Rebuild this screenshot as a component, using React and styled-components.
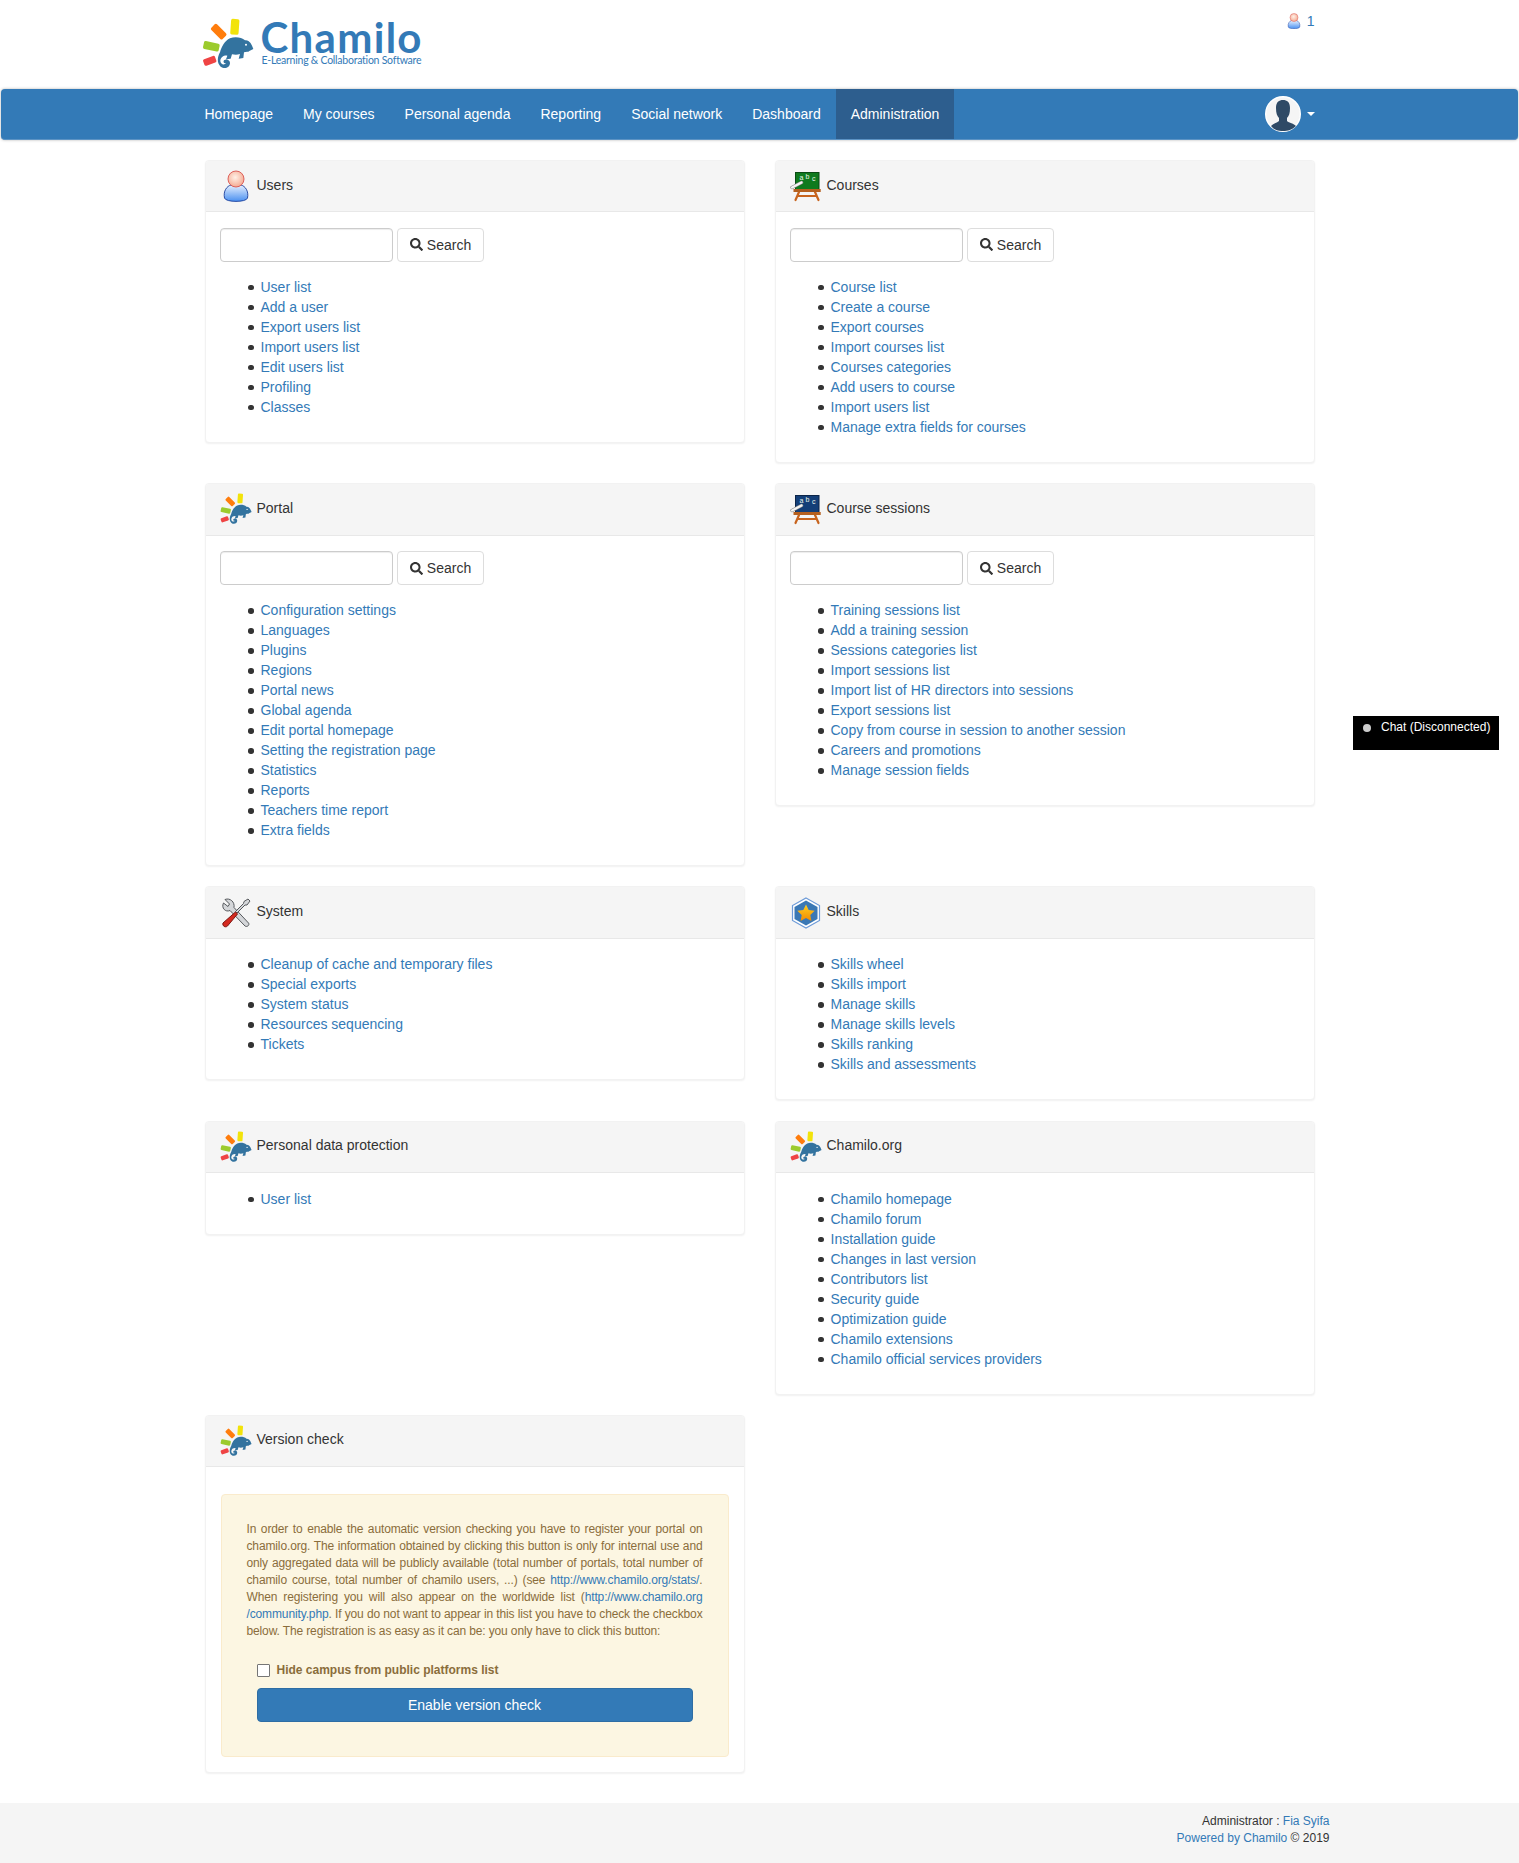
import React from "react";
import styled, { createGlobalStyle } from "styled-components";
import { FaSearch } from "react-icons/fa";

const GlobalStyle = createGlobalStyle`
  html, body {
    margin: 0;
    padding: 0;
    background: #ffffff;
    font-family: "Liberation Sans", Arial, sans-serif;
    font-size: 14px;
    line-height: 20px;
    color: #333333;
  }
  * { box-sizing: border-box; }
`;

const Page = styled.div`
  position: relative;
  width: 100%;
  min-height: 1863px;
  display: flex;
  flex-direction: column;
`;

const Header = styled.header`
  width: 1140px;
  height: 89px;
  margin: 0 auto;
  padding: 0 15px;
  display: flex;
  justify-content: space-between;
  align-items: flex-start;
`;

const Logo = styled.div`
  display: flex;
  align-items: flex-start;
  margin-top: 18px;
  margin-left: -3px;
`;

const LogoText = styled.div`
  margin: 1px 0 0 7px;
  display: flex;
  flex-direction: column;
  color: #337ab7;
`;

const LogoName = styled.span`
  font-family: "Lato", sans-serif;
  font-weight: 700;
  font-size: 42px;
  line-height: 36px;
  letter-spacing: 1.3px;
`;

const LogoTag = styled.span`
  font-family: "Lato", sans-serif;
  font-size: 10.5px;
  line-height: 11px;
  letter-spacing: -0.24px;
  white-space: nowrap;
  margin-left: 1px;
`;

const UserCount = styled.a`
  display: flex;
  align-items: center;
  gap: 5px;
  margin-top: 11px;
  color: #337ab7;
  font-size: 14px;
`;

const Navbar = styled.nav`
  height: 51px;
  background: #337ab7;
  border-radius: 4px;
  border-bottom: 1px solid #5c93c4;
  box-shadow: 0 0 3px rgba(0, 0, 0, 0.3);
  margin: 0 1px 20px;
`;

const NavInner = styled.div`
  width: 1140px;
  height: 50px;
  margin: 0 auto;
  display: flex;
  justify-content: space-between;
`;

const NavList = styled.div`
  display: flex;
`;

const NavItem = styled.a`
  padding: 15px;
  height: 50px;
  color: #ffffff;
  font-size: 14px;
  line-height: 20px;
  background: ${(p) => (p.$active ? "#2d5e8e" : "transparent")};
`;

const AvatarMenu = styled.div`
  display: flex;
  align-items: center;
  gap: 6px;
  margin-right: 15px;
`;

const Avatar = styled.svg`
  width: 36px;
  height: 36px;
  display: block;
`;

const Caret = styled.span`
  width: 0;
  height: 0;
  border-left: 4px solid transparent;
  border-right: 4px solid transparent;
  border-top: 4px solid #ffffff;
`;

const Grid = styled.main`
  width: 1110px;
  margin: 0 auto;
  display: grid;
  grid-template-columns: 540px 540px;
  column-gap: 30px;
  row-gap: 20.2px;
  align-items: start;
`;

const Panel = styled.section`
  background: #ffffff;
  border: 1px solid #f2f2f2;
  border-radius: 4px;
  box-shadow: 0 1px 2px rgba(0, 0, 0, 0.06);
`;

const PanelHeading = styled.div`
  height: 51.4px;
  padding: 0 14px;
  background: #f5f5f5;
  border-bottom: 1px solid #e8e8e8;
  border-radius: 3px 3px 0 0;
  display: flex;
  align-items: center;
  gap: 5px;
  font-size: 14px;
`;

const PanelTitle = styled.span`
  margin-bottom: 3px;
`;

const PanelBody = styled.div`
  padding: 15.6px 15px 15px;
`;

const SearchForm = styled.form`
  display: flex;
  gap: 4px;
  margin: 0 0 15px -0.5px;
`;

const SearchInput = styled.input`
  width: 173px;
  height: 34px;
  border: 1px solid #cccccc;
  border-radius: 4px;
  box-shadow: inset 0 1px 1px rgba(0, 0, 0, 0.075);
  background: #ffffff;
`;

const SearchButton = styled.button`
  height: 34px;
  width: 87px;
  padding: 0;
  border: 1px solid #dddddd;
  border-radius: 4px;
  background: #ffffff;
  color: #333333;
  font-family: inherit;
  font-size: 14px;
  display: flex;
  align-items: center;
  justify-content: center;
  gap: 4px;
`;

const LinkList = styled.ul`
  margin: 0 0 10px;
  padding-left: 40px;
  list-style: none;
`;

const LinkItem = styled.li`
  position: relative;

  &::before {
    content: "";
    position: absolute;
    left: -12.5px;
    top: 8px;
    width: 5.5px;
    height: 5.5px;
    border-radius: 50%;
    background: #333333;
  }
`;

const TextLink = styled.a`
  color: #337ab7;
  text-decoration: none;
`;

const Alert = styled.div`
  margin: 11px 0 0;
  height: 263px;
  padding: 26px 25px 0;
  background: #fcf6e2;
  border: 1px solid #faebcc;
  border-radius: 4px;
  color: #8a6d3b;
  font-size: 12px;
  line-height: 17px;
`;

const AlertLine = styled.span`
  display: block;
  letter-spacing: -0.13px;
  text-align: left;
  text-align-last: ${(p) => (p.$last ? "left" : "justify")};
`;

const CheckRow = styled.label`
  display: flex;
  align-items: center;
  gap: 7px;
  margin: 22px 0 0 10px;
  font-weight: 700;
  line-height: 17px;
`;

const CheckBox = styled.span`
  display: block;
  width: 13px;
  height: 13px;
  background: #ffffff;
  border: 1px solid #767676;
  border-radius: 1px;
`;

const EnableButton = styled.button`
  display: block;
  width: 436px;
  height: 34px;
  margin: 9px 0 0 10px;
  border: 1px solid #2e6da4;
  border-radius: 4px;
  background: #337ab7;
  color: #ffffff;
  font-family: inherit;
  font-size: 14px;
`;

const Footer = styled.footer`
  margin-top: auto;
  height: 60px;
  background: #f5f5f5;
  font-size: 12px;
  line-height: 17px;
`;

const FooterInner = styled.div`
  width: 1140px;
  margin: 0 auto;
  padding-top: 10px;
  text-align: right;
`;

const ChatTab = styled.div`
  position: absolute;
  top: 716px;
  right: 20px;
  width: 146px;
  height: 34px;
  padding: 3px 0 0 28px;
  background: #000000;
  color: #ffffff;
  font-size: 12px;
  line-height: 16px;
`;

const ChatDot = styled.span`
  position: absolute;
  left: 10px;
  top: 8px;
  width: 8px;
  height: 8px;
  border-radius: 50%;
  background: #cccccc;
`;

const IconSvg = styled.svg`
  display: block;
  flex: none;
  width: ${(p) => p.$size || 32}px;
  height: ${(p) => p.$size || 32}px;
`;

const ChameleonIcon = ({ size = 32 }) => (
  <IconSvg $size={size} viewBox="36 55 156 156">
    <rect x="122" y="58" width="25" height="47" rx="5" fill="#f2e30a" transform="rotate(4 135 81)" />
    <rect x="62" y="84" width="48" height="24" rx="5" fill="#ff7d0d" transform="rotate(45 86 96)" />
    <rect x="40" y="128" width="48" height="24" rx="5" fill="#9ccb2d" transform="rotate(12 64 140)" />
    <rect x="40" y="173" width="38" height="21" rx="5" fill="#ef4444" transform="rotate(-20 59 183)" />
    <path
      fill="#33739f"
      d="M190 148 C186 135 178 120 165 122 C155 113 135 110 120 116 C104 124 95 140 90 158 C82 172 80 190 92 201 C104 210 120 203 120 190 C120 180 108 176 102 182 C98 187 103 193 108 190 C103 198 92 194 91 184 C91 172 103 166 112 168 L108 179 L122 177 L126 164 C135 166 142 166 150 163 L146 177 L160 175 L162 158 C168 155 175 158 178 154 Z"
    />
    <circle cx="168" cy="135" r="3" fill="#ffffff" />
  </IconSvg>
);

const UserIcon = ({ size = 32 }) => (
  <IconSvg $size={size} viewBox="0 0 32 32">
    <defs>
      <linearGradient id="userBody" x1="0" y1="0" x2="0" y2="1">
        <stop offset="0" stopColor="#e6f0ff" />
        <stop offset="1" stopColor="#4a90f0" />
      </linearGradient>
      <radialGradient id="userHead" cx="0.45" cy="0.4" r="0.65">
        <stop offset="0" stopColor="#fff0e6" />
        <stop offset="1" stopColor="#f4a58c" />
      </radialGradient>
    </defs>
    <path
      d="M4.5 28 C3 21 7 16 11 15 L21 15 C25 16 29 21 27.5 28 C26.5 32.5 5.5 32.5 4.5 28 Z"
      fill="url(#userBody)"
      stroke="#1c3f9c"
      strokeWidth="0.9"
    />
    <circle cx="16" cy="9" r="8" fill="url(#userHead)" stroke="#d9534f" strokeWidth="0.9" />
  </IconSvg>
);

const BoardLetter = styled.text`
  font-family: "Liberation Sans", sans-serif;
  font-size: 7px;
  fill: #eef6ee;
`;

const BoardIcon = ({ color, dark }) => (
  <IconSvg viewBox="0 0 32 32">
    <path d="M9 22 L5.5 30 M25 22 L28.5 30 M7.5 26 L26.5 26" stroke="#c8641e" strokeWidth="2.2" strokeLinecap="round" />
    <rect x="5.5" y="2.5" width="23.5" height="17" fill={color} stroke={dark} strokeWidth="1" />
    <rect x="3.5" y="19" width="27.2" height="3" fill="#b5601f" />
    <BoardLetter x="9.5" y="10">a</BoardLetter>
    <BoardLetter x="15.5" y="9">b</BoardLetter>
    <BoardLetter x="22" y="11">c</BoardLetter>
    <path d="M2 17.5 L11.5 12.5" stroke="#8d8d8d" strokeWidth="3.4" strokeLinecap="round" />
    <path d="M2 17.5 L11.5 12.5" stroke="#f4f4f4" strokeWidth="2.2" strokeLinecap="round" />
  </IconSvg>
);

const ToolsIcon = () => (
  <IconSvg viewBox="0 0 32 32">
    <path
      d="M5 2.5 L9.5 7 L8 9.5 L3.5 6 C1 11 5.5 15.5 10 13.5 L25 29 C27 30.5 30 28 28.5 26 L14 10.5 C15 5 10 0.5 5 2.5 Z"
      fill="#d4d6d9"
      stroke="#55585c"
      strokeWidth="1"
    />
    <path d="M28 2 L30 4 L27 8 L25 8 L17 16 L15.5 14.5 L23.5 6.5 L24 4.5 Z" fill="#d4d6d9" stroke="#55585c" strokeWidth="1" />
    <path d="M15.5 15 L17.5 17 L7.5 29 C5.5 31 2 29 3 26 Z" fill="#d42a20" stroke="#7d1510" strokeWidth="1" />
  </IconSvg>
);

const SkillsIcon = () => (
  <IconSvg viewBox="0 0 32 32">
    <defs>
      <linearGradient id="skillStar" x1="0" y1="0" x2="0" y2="1">
        <stop offset="0" stopColor="#ffcf20" />
        <stop offset="1" stopColor="#f08a00" />
      </linearGradient>
    </defs>
    <path d="M16 1 L29.5 8.5 L29.5 23.5 L16 31 L2.5 23.5 L2.5 8.5 Z" fill="#ffffff" stroke="#6d9bd8" strokeWidth="1.2" />
    <path d="M16 3.5 L27.5 10 L27.5 22 L16 28.5 L4.5 22 L4.5 10 Z" fill="#3a78b5" />
    <path
      d="M16 7.5 L18.7 13 L24.7 13.8 L20.3 18 L21.4 24 L16 21.1 L10.6 24 L11.7 18 L7.3 13.8 L13.3 13 Z"
      fill="url(#skillStar)"
    />
  </IconSvg>
);

const NAV = ["Homepage", "My courses", "Personal agenda", "Reporting", "Social network", "Dashboard", "Administration"];

const PANELS = [
  {
    title: "Users",
    icon: <UserIcon />,
    search: true,
    links: ["User list", "Add a user", "Export users list", "Import users list", "Edit users list", "Profiling", "Classes"],
  },
  {
    title: "Courses",
    icon: <BoardIcon color="#0f7a1e" dark="#0a4a14" />,
    search: true,
    links: [
      "Course list",
      "Create a course",
      "Export courses",
      "Import courses list",
      "Courses categories",
      "Add users to course",
      "Import users list",
      "Manage extra fields for courses",
    ],
  },
  {
    title: "Portal",
    icon: <ChameleonIcon />,
    search: true,
    links: [
      "Configuration settings",
      "Languages",
      "Plugins",
      "Regions",
      "Portal news",
      "Global agenda",
      "Edit portal homepage",
      "Setting the registration page",
      "Statistics",
      "Reports",
      "Teachers time report",
      "Extra fields",
    ],
  },
  {
    title: "Course sessions",
    icon: <BoardIcon color="#143f78" dark="#0c2548" />,
    search: true,
    links: [
      "Training sessions list",
      "Add a training session",
      "Sessions categories list",
      "Import sessions list",
      "Import list of HR directors into sessions",
      "Export sessions list",
      "Copy from course in session to another session",
      "Careers and promotions",
      "Manage session fields",
    ],
  },
  {
    title: "System",
    icon: <ToolsIcon />,
    links: ["Cleanup of cache and temporary files", "Special exports", "System status", "Resources sequencing", "Tickets"],
  },
  {
    title: "Skills",
    icon: <SkillsIcon />,
    links: ["Skills wheel", "Skills import", "Manage skills", "Manage skills levels", "Skills ranking", "Skills and assessments"],
  },
  {
    title: "Personal data protection",
    icon: <ChameleonIcon />,
    links: ["User list"],
  },
  {
    title: "Chamilo.org",
    icon: <ChameleonIcon />,
    links: [
      "Chamilo homepage",
      "Chamilo forum",
      "Installation guide",
      "Changes in last version",
      "Contributors list",
      "Security guide",
      "Optimization guide",
      "Chamilo extensions",
      "Chamilo official services providers",
    ],
  },
];

export default function App() {
  return (
    <Page>
      <GlobalStyle />
      <Header>
        <Logo>
          <ChameleonIcon size={52} />
          <LogoText>
            <LogoName>Chamilo</LogoName>
            <LogoTag>E-Learning &amp; Collaboration Software</LogoTag>
          </LogoText>
        </Logo>
        <UserCount>
          <UserIcon size={16} />1
        </UserCount>
      </Header>

      <Navbar>
        <NavInner>
          <NavList>
            {NAV.map((item) => (
              <NavItem key={item} $active={item === "Administration"}>
                {item}
              </NavItem>
            ))}
          </NavList>
          <AvatarMenu>
            <Avatar viewBox="0 0 36 36">
              <circle cx="18" cy="18" r="17.3" fill="#f5f5f5" stroke="#ffffff" strokeWidth="1.4" />
              <path
                fill="#2f4a66"
                d="M11 12 C11 6 14 4 18 4 C22 4 25 6 25 12 C25 17 24 20 22 22 L22 25 C24 27 29 27.5 31 30 C27 34 23 35 18 35 C13 35 9 34 6 30 C8 27.5 12 27 14 25 L14 22 C12 20 11 17 11 12 Z"
              />
            </Avatar>
            <Caret />
          </AvatarMenu>
        </NavInner>
      </Navbar>

      <Grid>
        {PANELS.map((panel) => (
          <Panel key={panel.title}>
            <PanelHeading>
              {panel.icon}
              <PanelTitle>{panel.title}</PanelTitle>
            </PanelHeading>
            <PanelBody>
              {panel.search && (
                <SearchForm>
                  <SearchInput />
                  <SearchButton type="button">
                    <FaSearch size={13} />
                    Search
                  </SearchButton>
                </SearchForm>
              )}
              <LinkList>
                {panel.links.map((link) => (
                  <LinkItem key={link}>
                    <TextLink>{link}</TextLink>
                  </LinkItem>
                ))}
              </LinkList>
            </PanelBody>
          </Panel>
        ))}
        <Panel>
          <PanelHeading>
            <ChameleonIcon />
            <PanelTitle>Version check</PanelTitle>
          </PanelHeading>
          <PanelBody>
            <Alert>
              <AlertLine>In order to enable the automatic version checking you have to register your portal on</AlertLine>
              <AlertLine>chamilo.org. The information obtained by clicking this button is only for internal use and</AlertLine>
              <AlertLine>only aggregated data will be publicly available (total number of portals, total number of</AlertLine>
              <AlertLine>
                chamilo course, total number of chamilo users, ...) (see <TextLink>http://www.chamilo.org/stats/</TextLink>.
              </AlertLine>
              <AlertLine>
                When registering you will also appear on the worldwide list (<TextLink>http://www.chamilo.org</TextLink>
              </AlertLine>
              <AlertLine>
                <TextLink>/community.php</TextLink>. If you do not want to appear in this list you have to check the checkbox
              </AlertLine>
              <AlertLine $last>below. The registration is as easy as it can be: you only have to click this button:</AlertLine>
              <CheckRow>
                <CheckBox />
                Hide campus from public platforms list
              </CheckRow>
              <EnableButton type="button">Enable version check</EnableButton>
            </Alert>
          </PanelBody>
        </Panel>
      </Grid>

      <Footer>
        <FooterInner>
          Administrator : <TextLink>Fia Syifa</TextLink>
          <br />
          <TextLink>Powered by Chamilo</TextLink> © 2019
        </FooterInner>
      </Footer>

      <ChatTab>
        <ChatDot />
        Chat (Disconnected)
      </ChatTab>
    </Page>
  );
}
